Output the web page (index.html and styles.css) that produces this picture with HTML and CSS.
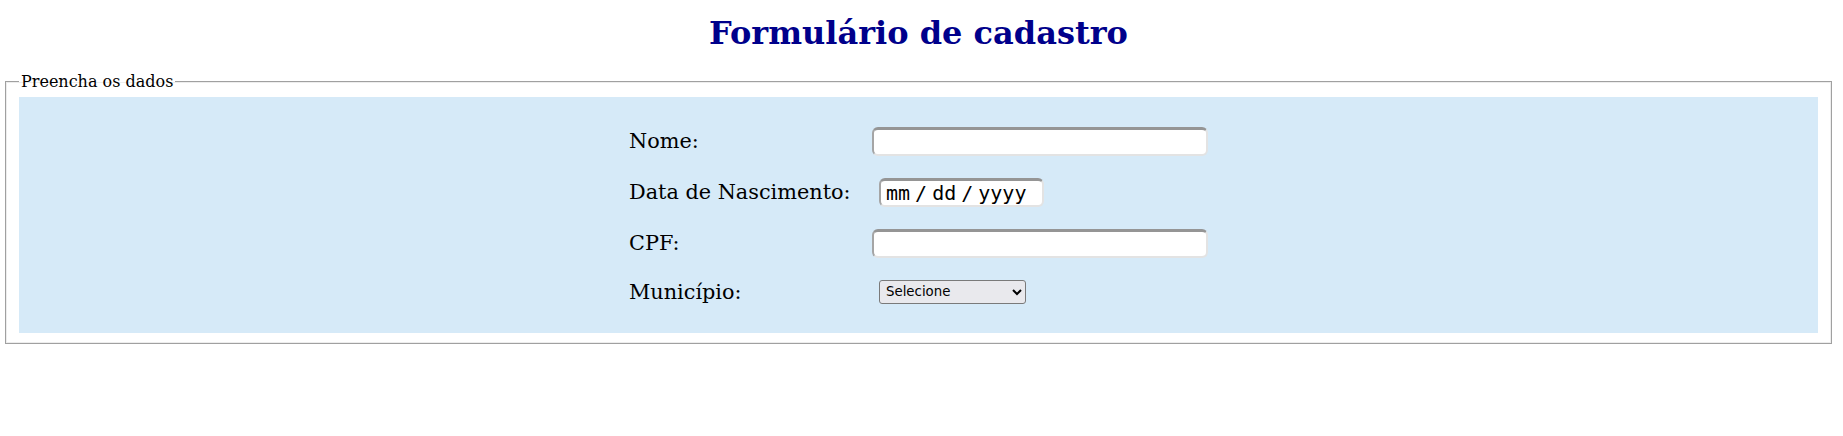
FILE: index.html
```html
<!DOCTYPE html>
<html lang="pt-BR">
<head>
<meta charset="utf-8">
<title>Formulário de cadastro</title>
<link rel="stylesheet" href="styles.css">
</head>
<body>
<h1 class="title">Formulário de cadastro</h1>
<fieldset class="box">
  <legend class="box-legend">Preencha os dados</legend>
  <div class="panel">
    <form class="form">
      <div class="row">
        <label class="label" for="nome">Nome:</label>
        <input class="text-input" type="text" id="nome">
      </div>
      <div class="row">
        <label class="label" for="nasc">Data de Nascimento:</label>
        <input class="date-input" type="date" id="nasc">
      </div>
      <div class="row">
        <label class="label" for="cpf">CPF:</label>
        <input class="text-input" type="text" id="cpf">
      </div>
      <div class="row">
        <label class="label" for="mun">Município:</label>
        <select class="select" id="mun">
          <option>Selecione</option>
        </select>
      </div>
    </form>
  </div>
</fieldset>
</body>
</html>
```

FILE: styles.css
```css
html, body {
  background: #ffffff;
}

body {
  margin: 0 11px 0 5px;
  font-family: "DejaVu Serif", serif;
  color: #000;
}

.title {
  margin: 14px 0 20px;
  text-align: center;
  font-family: "DejaVu Serif", serif;
  font-weight: bold;
  font-size: 32px;
  color: #00008b;
}

.box {
  margin: 0;
  padding: 5.6px 13px 10px;
  border: 1px solid #a0a0a0;
  box-shadow: inset 0 0 0 1px #ededed;
}

.box-legend {
  font-family: "DejaVu Serif", serif;
  font-size: 16px;
  padding: 0 2px;
}

.panel {
  background: #d6eaf8;
  padding: 30px 0 29px;
  display: flex;
  justify-content: center;
}

.form {
  width: 579px;
  display: flex;
  flex-direction: column;
  gap: 22px;
  margin: 0;
}

.row {
  display: flex;
  align-items: center;
}

.label {
  width: 243px;
  flex: none;
  font-family: "DejaVu Serif", serif;
  font-size: 20.8px;
  line-height: 24px;
}

.text-input {
  box-sizing: border-box;
  width: 336px;
  height: 29px;
  margin: 0;
  padding: 1px 4px;
  border-style: solid;
  border-width: 3px 2px 2px 2px;
  border-color: #959595 #e3e3e3 #e3e3e3 #a5a5a5;
  border-radius: 6px;
  background: #fff;
  font-size: 16px;
  outline: none;
}

.date-input {
  box-sizing: border-box;
  width: 165px;
  height: 29px;
  margin: 0 0 0 7px;
  padding: 0 2px 0 4px;
  border-style: solid;
  border-width: 3px 2px 2px 2px;
  border-color: #959595 #e3e3e3 #e3e3e3 #a5a5a5;
  border-radius: 6px;
  background: #fff;
  font-family: "DejaVu Sans Mono", monospace;
  font-size: 20px;
  color: #000;
}

.date-input::-webkit-calendar-picker-indicator {
  display: none;
}

.date-input::-webkit-datetime-edit {
  padding: 0;
}

.date-input::-webkit-datetime-edit-text {
  padding: 0 4px;
}

.select {
  box-sizing: border-box;
  width: 147px;
  height: 24px;
  margin: 0 0 0 7px;
  padding: 0 2px;
  border: 1px solid #7a7a7a;
  border-radius: 3px;
  background-color: #e9e9ed;
  font-family: "DejaVu Sans", sans-serif;
  font-size: 13.33px;
  color: #000;
}
```
